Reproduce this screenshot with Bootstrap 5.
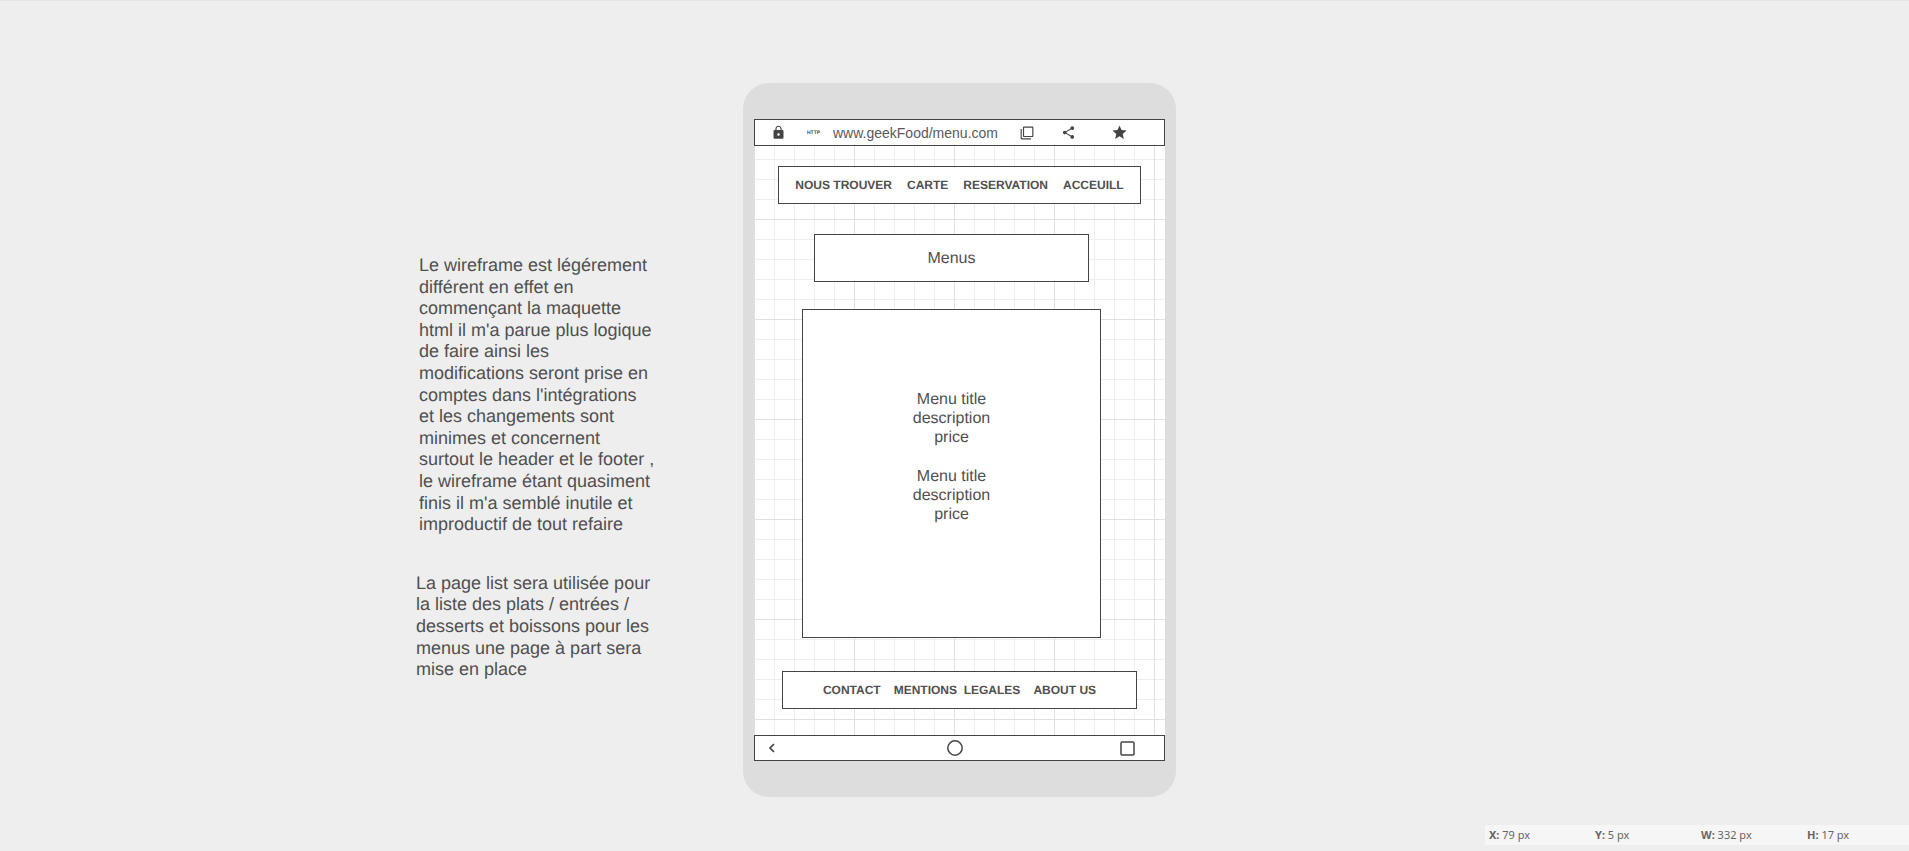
<!DOCTYPE html>
<html lang="fr">
<head>
<meta charset="utf-8">
<meta name="viewport" content="width=device-width, initial-scale=1">
<title>Wireframe geekFood - menu</title>
<link href="https://cdn.jsdelivr.net/npm/bootstrap@5.3.0/dist/css/bootstrap.min.css" rel="stylesheet">
<style>
  :root { --ink: #444; --text: #505050; --paper: #fff; }
  body { font-family: "Liberation Sans", Arial, sans-serif; font-size: 16px; line-height: 1.2; color: var(--text); background: #eee; border-top: 1px solid #e6e6e6; text-rendering: geometricPrecision; }
  .board { display: grid; grid-template-columns: minmax(260px, 1fr) 433px minmax(0, 1fr); padding: 82px 0 28px 10px; }
  .notes { font-size: 18px; padding-top: 172px; padding-right: 76px; }
  .note-text { width: 248px; }
  .note-second { margin-top: 37px; margin-right: 3px; }
  .phone { background: #ddd; border-radius: 26px; padding: 36px 11px; }
  /* Graph paper: fine lines every 20px, stronger ones every 100px */
  .screen {
    background-color: var(--paper);
    background-image:
      linear-gradient(90deg, #e0e0e0 1px, transparent 1px),
      linear-gradient(#e0e0e0 1px, transparent 1px),
      linear-gradient(90deg, #eee 1px, transparent 1px),
      linear-gradient(#eee 1px, transparent 1px);
    background-size: 100px 100px, 100px 100px, 20px 20px, 20px 20px;
    background-position: 100px 0, 0 73px, 20px 0, 0 13px;
  }
  .frame { background: var(--paper); border: 1px solid var(--ink); }
  .top-bar { height: 27px; padding-left: 16px; padding-right: 36px; color: var(--ink); }
  .bottom-bar { height: 26px; padding-left: 13px; padding-right: 29px; color: var(--ink); }
  .tool { display: flex; padding: 0; border: 0; background: none; color: inherit; }
  .tool svg { display: block; fill: currentColor; }
  .scheme { font-size: 5px; font-weight: 700; width: 14px; margin-left: 21px; margin-right: 12px; }
  .address { min-width: 0; padding: 0; border: 0; background: none; color: #5a5a5a; font-size: 14px; height: 20px; }
  .gap-share { margin-left: 27px; }
  .gap-star { margin-left: 35px; }
  .links { height: 38px; font-size: 12px; font-weight: 700; }
  .links a { color: inherit; text-decoration: none; white-space: nowrap; }
  .top-links { margin: 20px 24px 30px; gap: 15px; }
  .foot-links { margin: 33px 28px 26px; gap: 13px; }
  .heading { height: 48px; margin: 0 76px 27px 60px; padding-top: 2px; font-size: 16px; font-weight: 400; line-height: 1.2; color: var(--text); }
  .menu-list { min-height: 329px; margin: 0 64px 0 48px; padding-top: 80px; }
  .menu-item + .menu-item { margin-top: 19px; }
  .back { width: 22px; }
  .status { width: 424px; background: #f6f6f6; height: 20px; margin-bottom: 6px; font-family: "Noto Sans", "Open Sans", sans-serif; font-size: 11px; line-height: 20px; color: #666; text-rendering: auto; }
</style>
</head>
<body class="d-flex flex-column min-vh-100">
<main class="board">
  <aside class="notes d-flex flex-column align-items-end">
    <p class="note-text mb-0">Le wireframe est légérement<br>différent en effet en<br>commençant la maquette<br>html il m'a parue plus logique<br>de faire ainsi les<br>modifications seront prise en<br>comptes dans l'intégrations<br>et les changements sont<br>minimes et concernent<br>surtout le header et le footer ,<br>le wireframe étant quasiment<br>finis il m'a semblé inutile et<br>improductif de tout refaire</p>
    <p class="note-text note-second mb-0">La page list sera utilisée pour<br>la liste des plats / entrées /<br>desserts et boissons pour les<br>menus une page à part sera<br>mise en place</p>
  </aside>

  <section class="phone" aria-label="Téléphone">
    <div class="frame top-bar d-flex align-items-center">
      <svg width="15" height="15" viewBox="0 0 24 24" fill="currentColor" aria-hidden="true"><path d="M18 8h-1V6c0-2.760-2.240-5-5-5S7 3.240 7 6v2H6c-1.100 0-2 .9-2 2v10c0 1.100.9 2 2 2h12c1.100 0 2-.9 2-2V10c0-1.100-.9-2-2-2zm-6 9c-1.100 0-2-.9-2-2s.9-2 2-2 2 .9 2 2-.9 2-2 2zm3.100-9H8.900V6c0-1.710 1.390-3.100 3.100-3.100s3.100 1.390 3.100 3.100v2z"/></svg>
      <span class="scheme">HTTP</span>
      <input class="address flex-grow-1" type="text" value="www.geekFood/menu.com" aria-label="Adresse">
      <button class="tool" type="button" aria-label="Onglets"><svg width="14" height="14" viewBox="0 0 24 24"><path d="M3 5H1v16c0 1.100.9 2 2 2h16v-2H3V5zm18-4H7c-1.100 0-2 .9-2 2v14c0 1.100.9 2 2 2h14c1.100 0 2-.9 2-2V3c0-1.100-.9-2-2-2zm0 16H7V3h14v14z"/></svg></button>
      <button class="tool gap-share" type="button" aria-label="Partager"><svg width="15" height="15" viewBox="0 0 24 24"><path d="M18 16.080c-.76 0-1.440.3-1.960.77L8.910 12.700c.05-.23.09-.46.09-.7s-.04-.47-.09-.7l7.050-4.110c.54.5 1.250.81 2.040.81 1.660 0 3-1.340 3-3s-1.340-3-3-3-3 1.340-3 3c0 .24.04.47.09.7L8.040 9.810C7.500 9.310 6.790 9 6 9c-1.660 0-3 1.340-3 3s1.340 3 3 3c.79 0 1.500-.31 2.040-.81l7.120 4.160c-.05.21-.08.43-.08.65 0 1.610 1.310 2.920 2.920 2.920s2.920-1.310 2.920-2.920-1.310-2.920-2.920-2.920z"/></svg></button>
      <button class="tool gap-star" type="button" aria-label="Favori"><svg width="17" height="17" viewBox="0 0 24 24"><path d="M12 17.270L18.180 21l-1.640-7.030L22 9.240l-7.190-.61L12 2 9.190 8.630 2 9.240l5.460 4.730L5.820 21z"/></svg></button>
    </div>

    <div class="screen overflow-hidden">
      <nav class="frame links top-links d-flex justify-content-center align-items-center" aria-label="Navigation">
        <a href="#trouver">NOUS TROUVER</a>
        <a href="#carte">CARTE</a>
        <a href="#reservation">RESERVATION</a>
        <a href="#accueil">ACCEUILL</a>
      </nav>
      <h1 class="frame heading d-flex justify-content-center align-items-center">Menus</h1>
      <div class="frame menu-list text-center">
        <div class="menu-item">Menu title<br>description<br>price</div>
        <div class="menu-item">Menu title<br>description<br>price</div>
      </div>
      <footer class="frame links foot-links d-flex justify-content-center align-items-center">
        <a href="#contact">CONTACT</a>
        <a href="#mentions">MENTIONS&nbsp; LEGALES</a>
        <a href="#about">ABOUT US</a>
      </footer>
    </div>

    <div class="frame bottom-bar d-flex justify-content-between align-items-center">
      <button class="tool back" type="button" aria-label="Retour"><svg width="7" height="10" viewBox="0 0 7 10"><path d="M6 1 2 5l4 4" fill="none" stroke="currentColor" stroke-width="1.700"/></svg></button>
      <button class="tool" type="button" aria-label="Accueil"><svg width="16" height="16" viewBox="0 0 16 16"><circle cx="8" cy="8" r="7.200" fill="none" stroke="currentColor" stroke-width="1.500"/></svg></button>
      <button class="tool" type="button" aria-label="Applications"><svg width="15" height="15" viewBox="0 0 15 15"><rect x="1" y="1" width="13" height="13" rx="1" fill="none" stroke="currentColor" stroke-width="1.500"/></svg></button>
    </div>
  </section>
</main>

<div class="status row row-cols-4 gx-0 mt-auto ms-auto me-0">
  <div class="col ps-1"><b>X:</b> 79 px</div>
  <div class="col ps-1"><b>Y:</b> 5 px</div>
  <div class="col ps-1"><b>W:</b> 332 px</div>
  <div class="col ps-1"><b>H:</b> 17 px</div>
</div>
<script src="https://cdn.jsdelivr.net/npm/bootstrap@5.3.0/dist/js/bootstrap.bundle.min.js"></script>
</body>
</html>
